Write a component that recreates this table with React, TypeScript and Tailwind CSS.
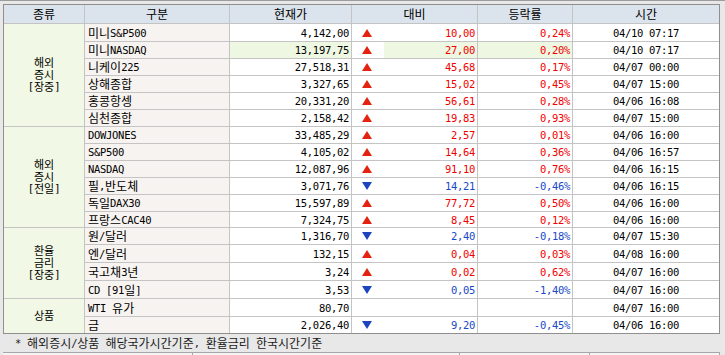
import React from "react";

type Dir = "up" | "down" | "none";
type Row = { name: string; price: string; dir: Dir; diff: string; rate: string; time: string; hl?: boolean };

const groups: { label: string[]; rows: Row[] }[] = [
  {
    label: ["해외", "증시", "[장중]"],
    rows: [
      { name: "미니S&P500", price: "4,142,00", dir: "up", diff: "10,00", rate: "0,24%", time: "04/10 07:17" },
      { name: "미니NASDAQ", price: "13,197,75", dir: "up", diff: "27,00", rate: "0,20%", time: "04/10 07:17", hl: true },
      { name: "니케이225", price: "27,518,31", dir: "up", diff: "45,68", rate: "0,17%", time: "04/07 00:00" },
      { name: "상해종합", price: "3,327,65", dir: "up", diff: "15,02", rate: "0,45%", time: "04/07 15:00" },
      { name: "홍콩항셍", price: "20,331,20", dir: "up", diff: "56,61", rate: "0,28%", time: "04/06 16:08" },
      { name: "심천종합", price: "2,158,42", dir: "up", diff: "19,83", rate: "0,93%", time: "04/07 15:00" },
    ],
  },
  {
    label: ["해외", "증시", "[전일]"],
    rows: [
      { name: "DOWJONES", price: "33,485,29", dir: "up", diff: "2,57", rate: "0,01%", time: "04/06 16:00" },
      { name: "S&P500", price: "4,105,02", dir: "up", diff: "14,64", rate: "0,36%", time: "04/06 16:57" },
      { name: "NASDAQ", price: "12,087,96", dir: "up", diff: "91,10", rate: "0,76%", time: "04/06 16:15" },
      { name: "필,반도체", price: "3,071,76", dir: "down", diff: "14,21", rate: "-0,46%", time: "04/06 16:15" },
      { name: "독일DAX30", price: "15,597,89", dir: "up", diff: "77,72", rate: "0,50%", time: "04/06 16:00" },
      { name: "프랑스CAC40", price: "7,324,75", dir: "up", diff: "8,45", rate: "0,12%", time: "04/06 16:00" },
    ],
  },
  {
    label: ["환율", "금리", "[장중]"],
    rows: [
      { name: "원/달러", price: "1,316,70", dir: "down", diff: "2,40", rate: "-0,18%", time: "04/07 15:30" },
      { name: "엔/달러", price: "132,15", dir: "up", diff: "0,04", rate: "0,03%", time: "04/08 16:00" },
      { name: "국고채3년", price: "3,24", dir: "up", diff: "0,02", rate: "0,62%", time: "04/07 16:00" },
      { name: "CD [91일]", price: "3,53", dir: "down", diff: "0,05", rate: "-1,40%", time: "04/07 16:00" },
    ],
  },
  {
    label: ["상품"],
    rows: [
      { name: "WTI 유가", price: "80,70", dir: "none", diff: "", rate: "", time: "04/07 16:00" },
      { name: "금", price: "2,026,40", dir: "down", diff: "9,20", rate: "-0,45%", time: "04/06 16:00" },
    ],
  },
];

const SPLIT = /([\uAC00-\uD7A3\u3131-\u318E]+)/;
const IS_HANGUL = /^[\uAC00-\uD7A3\u3131-\u318E]+$/;

function T({ s, small }: { s: string; small?: boolean }) {
  const parts = s.split(SPLIT).filter((p) => p !== "");
  return (
    <>
      {parts.map((p, i) =>
        IS_HANGUL.test(p) ? (
          <span
            key={i}
            className={
              small
                ? "font-['Noto_Sans_CJK_KR',sans-serif] text-[11px]"
                : "font-['Noto_Sans_CJK_KR',sans-serif] text-[12px]"
            }
          >
            {p}
          </span>
        ) : (
          <span key={i} className="font-['DejaVu_Sans_Mono',monospace] text-[10.5px] tracking-[-0.3px] whitespace-pre">
            {p}
          </span>
        )
      )}
    </>
  );
}

function Arrow({ dir }: { dir: Dir }) {
  if (dir === "up")
    return (
      <svg width="10" height="8" viewBox="0 0 10 8">
        <polygon points="5,0 10,8 0,8" fill="#e3220f" />
      </svg>
    );
  if (dir === "down")
    return (
      <svg width="10" height="8" viewBox="0 0 10 8">
        <polygon points="0,0 10,0 5,8" fill="#1e44bd" />
      </svg>
    );
  return null;
}

const line = "border-[#c4c4c4]";

export default function App() {
  const total = groups.reduce((a, g) => a + g.rows.length, 0);
  let idx = 0;
  return (
    <div className="w-[725px] h-[355px] overflow-hidden bg-[#e8e8e8] border-t border-[#9c9c9c] pt-[3px] pl-[3px] text-black">
      <div className="w-[717px] border border-[#8f8f8f] bg-white grid grid-cols-[81px_145px_122px_32px_94px_95px_146px] grid-rows-[19px_18px_17px_17px_17px_17px_17px_17px_17px_17px_17px_17px_16px_17px_18px_18px_18px_18px_16px] leading-[12px]">
        <div className={`bg-[#dbe3ec] border-r border-b ${line} flex items-center justify-center`}>
          <T s="종류" />
        </div>
        <div className={`bg-[#dbe3ec] border-r border-b ${line} flex items-center justify-center`}>
          <T s="구분" />
        </div>
        <div className={`bg-[#dbe3ec] border-r border-b ${line} flex items-center justify-center`}>
          <T s="현재가" />
        </div>
        <div className={`col-span-2 bg-[#dbe3ec] border-r border-b ${line} flex items-center justify-center`}>
          <T s="대비" />
        </div>
        <div className={`bg-[#dbe3ec] border-r border-b ${line} flex items-center justify-center`}>
          <T s="등락률" />
        </div>
        <div className={`bg-[#dbe3ec] border-b ${line} flex items-center justify-center`}>
          <T s="시간" />
        </div>

        {groups.map((g, gi) => {
          const span =
            g.rows.length === 6 ? "row-span-6" : g.rows.length === 4 ? "row-span-4" : "row-span-2";
          const lastGroup = gi === groups.length - 1;
          return (
            <React.Fragment key={gi}>
              {g.rows.map((r, ri) => {
                idx++;
                const last = idx === total;
                const bb = last ? "" : "border-b";
                const up = r.dir === "up";
                const color = up ? "text-[#f00000]" : "text-[#1848c8]";
                const cellBg = r.hl ? "bg-[#eef7e2]" : "bg-white";
                return (
                  <React.Fragment key={ri}>
                    {ri === 0 && (
                      <div
                        className={`${span} col-start-1 bg-[#f1f8e5] border-r ${lastGroup ? "" : "border-b"} ${line} flex flex-col items-center justify-center leading-[12px] pb-[2px]`}
                      >
                        {g.label.map((l, li) => (
                          <div key={li} className="h-[12px] flex items-center">
                            <T s={l} small />
                          </div>
                        ))}
                      </div>
                    )}
                    <div className={`col-start-2 bg-[#f7f3f0] border-r ${bb} ${line} flex items-center pl-[3px]`}>
                      <T s={r.name} />
                    </div>
                    <div className={`${cellBg} border-r ${bb} ${line} flex items-center justify-end pr-[2px]`}>
                      <T s={r.price} />
                    </div>
                    <div className={`bg-white ${bb} ${line} flex items-center pl-[10px]`}>
                      <Arrow dir={r.dir} />
                    </div>
                    <div className={`${cellBg} border-r ${bb} ${line} flex items-center justify-end pr-[2px] ${color}`}>
                      <T s={r.diff} />
                    </div>
                    <div className={`${cellBg} border-r ${bb} ${line} flex items-center justify-end pr-[2px] ${color}`}>
                      <T s={r.rate} />
                    </div>
                    <div className={`bg-white ${bb} ${line} flex items-center justify-center`}>
                      <T s={r.time} />
                    </div>
                  </React.Fragment>
                );
              })}
            </React.Fragment>
          );
        })}
      </div>
      <div className="h-[18px] flex items-center pl-[12px] leading-[12px] text-[#1a1a1a]">
        <T s="* 해외증시/상품 해당국가시간기준, 환율금리 한국시간기준" />
      </div>
      <div className="w-[717px] h-[4px] border-t border-[#a8a8a8] bg-[#f4f4f4] flex">
        <div className="w-[190px] border-r border-[#a8a8a8]" />
        <div className="w-[267px] border-r border-[#a8a8a8]" />
        <div className="w-[130px] border-r border-[#a8a8a8]" />
        <div className="w-[130px] border-r border-[#a8a8a8]" />
      </div>
    </div>
  );
}
